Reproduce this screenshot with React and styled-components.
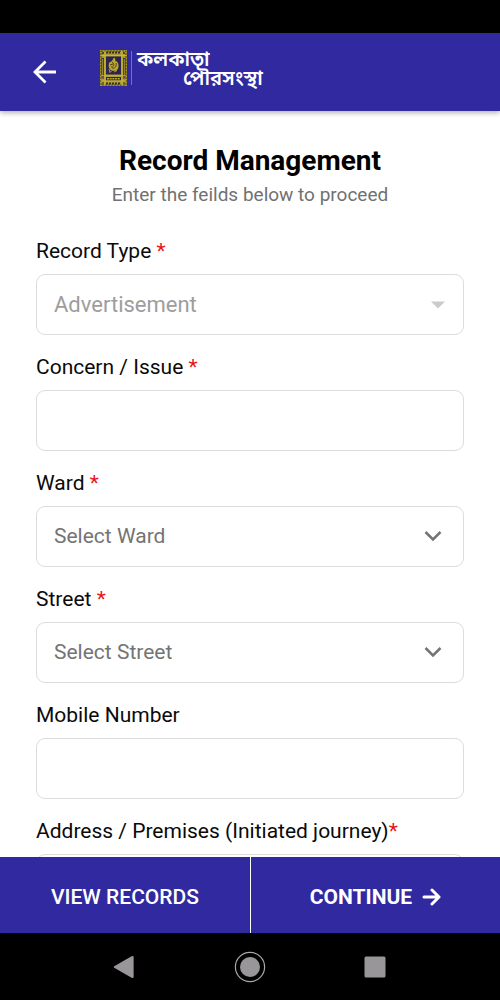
import React from "react";
import styled, { createGlobalStyle, css } from "styled-components";

const GlobalStyle = createGlobalStyle`
  *, *::before, *::after { box-sizing: border-box; }
  body {
    margin: 0;
    background: #fff;
    color: #0a0a0a;
    font-family: Roboto, "Liberation Sans", sans-serif;
  }
  button, input, select { font: inherit; }
`;

const Screen = styled.div`
  display: flex;
  flex-direction: column;
  height: 100vh;
`;

const StatusBar = styled.div`
  flex: none;
  height: 33px;
  background: #000;
`;

const Header = styled.header`
  flex: none;
  display: flex;
  align-items: center;
  gap: 40px;
  height: 78px;
  padding: 0 30px;
  background: #3029a0;
  box-shadow: 0 2px 5px rgba(0, 0, 0, 0.3);
  z-index: 1;
`;

const BackButton = styled.button`
  display: flex;
  padding: 0;
  border: 0;
  background: none;
  color: #fff;
  cursor: pointer;
`;

const Brand = styled.div`
  display: flex;
  align-items: center;
  gap: 4px;
  padding-bottom: 8px;
`;

const BrandRule = styled.span`
  width: 1px;
  height: 34px;
  background: #7470c4;
`;

const BrandName = styled.div`
  display: flex;
  flex-direction: column;
  color: #fff;
  font-family: "Noto Sans Bengali", "Noto Sans", "Lohit Bengali", FreeSans, sans-serif;
  font-size: 20px;
  font-weight: 600;
  line-height: 19px;
  padding: 6px 0 0 1px;
  white-space: nowrap;
`;

const BrandLower = styled.span`
  padding-left: 46px;
`;

const Main = styled.main`
  flex: 1;
  min-height: 0;
  overflow-y: auto;
  scrollbar-width: none;
  padding: 34px 36px 24px;
`;

const Title = styled.h1`
  margin: 0;
  font-size: 28px;
  font-weight: 700;
  line-height: 32px;
  text-align: center;
  color: #000;
`;

const Subtitle = styled.p`
  margin: 5px 0 30px;
  font-size: 19px;
  line-height: 26px;
  text-align: center;
  color: #717171;
`;

const Form = styled.form`
  display: flex;
  flex-direction: column;
  gap: 19px;
`;

const Field = styled.div`
  display: flex;
  flex-direction: column;
  gap: 10px;
`;

const Label = styled.label`
  font-size: 21px;
  line-height: 26px;
`;

const Required = styled.span`
  color: #e8141c;
`;

const control = css`
  width: 100%;
  height: 61px;
  padding: 0 17px 2px;
  border: 1px solid #dcdcdc;
  border-radius: 9px;
  background: #fff;
  outline: 0;
`;

const TextInput = styled.input`
  ${control}
  font-size: 21px;
`;

const SelectWrap = styled.div`
  display: grid;
  align-items: center;
  > * { grid-area: 1 / 1; }
  > svg {
    justify-self: end;
    margin-right: ${(p) => (p.$caret ? 19 : 22)}px;
    pointer-events: none;
  }
`;

const Select = styled.select`
  ${control}
  appearance: none;
  opacity: 1;
  font-size: 21px;
  color: #747474;
  &:disabled {
    padding-bottom: 0;
    font-size: 22px;
    color: #9d9d9d;
  }
`;

const Actions = styled.div`
  flex: none;
  display: grid;
  grid-template-columns: 1fr 1fr;
  height: 76px;
  z-index: 1;
`;

const ActionButton = styled.button`
  display: flex;
  align-items: center;
  justify-content: center;
  gap: 10px;
  border: 0;
  padding: 4px 0 0;
  background: #3029a0;
  color: #fff;
  font-size: 21px;
  font-weight: ${(p) => (p.$strong ? 700 : 500)};
  cursor: pointer;
  & + & { border-left: 1px solid #fff; }
`;

const SystemNav = styled.nav`
  flex: none;
  display: flex;
  justify-content: center;
  gap: 93px;
  height: 67px;
  background: #000;
`;

const NavButton = styled.button`
  display: flex;
  align-items: center;
  padding: 0;
  border: 0;
  background: none;
  cursor: pointer;
`;

function BackIcon() {
  return (
    <svg width="30" height="30" viewBox="0 0 30 30" fill="none" stroke="#fff" strokeWidth="2.8">
      <path d="M26 15H5.5M15.5 4.5L5 15L15.5 25.5" />
    </svg>
  );
}

function Emblem() {
  return (
    <svg width="27" height="36" viewBox="0 0 27 36" fill="none" aria-hidden="true">
      <rect width="27" height="36" fill="#a79a30" />
      <rect x="1" y="1" width="25" height="34" stroke="#544719" strokeWidth="1" strokeDasharray="2 1" />
      <path d="M6 2.5H21M6 33.5H21" stroke="#3b2d35" strokeWidth="2" strokeDasharray="2 1" />
      <path d="M2.7 8V27M24.3 8V27" stroke="#39295c" strokeWidth="2.6" />
      <path d="M2.7 9V26M24.3 9V26" stroke="#a79a30" strokeWidth="1" />
      <rect x="6" y="6.5" width="15" height="18" fill="#2d2350" />
      <rect x="6" y="27" width="15" height="3.5" fill="#2d2350" />
      <path d="M7 28.7H20" stroke="#b8a72a" strokeWidth="1.6" strokeDasharray="2 .7" />
      <path d="M5 1V35M22 1V35M1 5.5H26M1 25.8H26M1 31H26" stroke="#cdb82b" strokeWidth="1.1" />
      <path d="M14 7.5C15.5 8.5 15.5 10 15.3 11.5C17 10.5 19 13.5 18.5 17C18 20.5 15 21.5 12 20.5C8.5 19.5 8 15.5 9.5 12C11 13 12.5 10 14 7.5Z" fill="#bba928" />
      <path d="M12 12C15 14 14 17 11 17M16 13C17 16 15 19 12 18M10 15L13 14" stroke="#49381e" strokeWidth=".9" />
      <path d="M9 19L10 22.5L12 20.5M14 22L17 20.5" stroke="#d0be32" strokeWidth=".8" />
      <path d="M2 3H4M3 2V4M23 3H25M24 2V4M2 28H4M23 28H25M2 33H4M23 33H25" stroke="#352443" strokeWidth="1" />
    </svg>
  );
}

function CaretIcon() {
  return (
    <svg width="14" height="10" viewBox="0 0 14 10" fill="#cbcbcb">
      <path d="M0 1.5H14L7 8.5Z" />
    </svg>
  );
}

function ChevronIcon() {
  return (
    <svg width="18" height="14" viewBox="0 0 18 14" fill="none" stroke="#747474" strokeWidth="2.5">
      <path d="M1.5 2L9 9.5L16.5 2" />
    </svg>
  );
}

function ForwardIcon() {
  return (
    <svg width="19" height="18" viewBox="0 0 19 18" fill="none" stroke="#fff" strokeWidth="3" strokeLinecap="round" strokeLinejoin="round">
      <path d="M2 9H17M10 2L17 9L10 16" />
    </svg>
  );
}

function SelectField({ id, label, value, disabled }) {
  return (
    <Field>
      <Label htmlFor={id}>
        {label} <Required>*</Required>
      </Label>
      <SelectWrap $caret={disabled}>
        <Select id={id} disabled={disabled} defaultValue={value}>
          <option>{value}</option>
        </Select>
        {disabled ? <CaretIcon /> : <ChevronIcon />}
      </SelectWrap>
    </Field>
  );
}

function TextField({ id, label, type = "text", children }) {
  return (
    <Field>
      <Label htmlFor={id}>
        {label}
        {children}
      </Label>
      <TextInput id={id} type={type} />
    </Field>
  );
}

export default function App() {
  return (
    <Screen>
      <GlobalStyle />
      <StatusBar />
      <Header>
        <BackButton type="button" aria-label="Back">
          <BackIcon />
        </BackButton>
        <Brand>
          <Emblem />
          <BrandRule />
          <BrandName lang="bn">
            <span>কলকাতা</span>
            <BrandLower>পৌরসংস্থা</BrandLower>
          </BrandName>
        </Brand>
      </Header>
      <Main>
        <Title>Record Management</Title>
        <Subtitle>Enter the feilds below to proceed</Subtitle>
        <Form>
          <SelectField id="type" label="Record Type" value="Advertisement" disabled />
          <TextField id="issue" label="Concern / Issue ">
            <Required>*</Required>
          </TextField>
          <SelectField id="ward" label="Ward" value="Select Ward" />
          <SelectField id="street" label="Street" value="Select Street" />
          <TextField id="mobile" label="Mobile Number" type="tel" />
          <TextField id="address" label="Address / Premises (Initiated journey)">
            <Required>*</Required>
          </TextField>
        </Form>
      </Main>
      <Actions>
        <ActionButton type="button">VIEW RECORDS</ActionButton>
        <ActionButton type="button" $strong>
          CONTINUE
          <ForwardIcon />
        </ActionButton>
      </Actions>
      <SystemNav aria-label="System">
        <NavButton type="button" aria-label="System back">
          <svg width="32" height="32" viewBox="0 0 32 32" fill="#999699">
            <path d="M5.2 15.2L22.6 5.2Q24.6 4.3 24.6 6.2V25.8Q24.6 27.7 22.6 26.8L5.2 16.8Q4.2 16 5.2 15.2Z" />
          </svg>
        </NavButton>
        <NavButton type="button" aria-label="Home">
          <svg width="32" height="32" viewBox="0 0 32 32">
            <circle cx="16" cy="16" r="14.6" fill="none" stroke="#aaa7aa" strokeWidth="1.2" />
            <circle cx="16" cy="16" r="10" fill="#999699" />
          </svg>
        </NavButton>
        <NavButton type="button" aria-label="Recent apps">
          <svg width="32" height="32" viewBox="0 0 32 32">
            <rect x="5.5" y="5.5" width="21" height="21" rx="1.5" fill="#999699" />
          </svg>
        </NavButton>
      </SystemNav>
    </Screen>
  );
}
